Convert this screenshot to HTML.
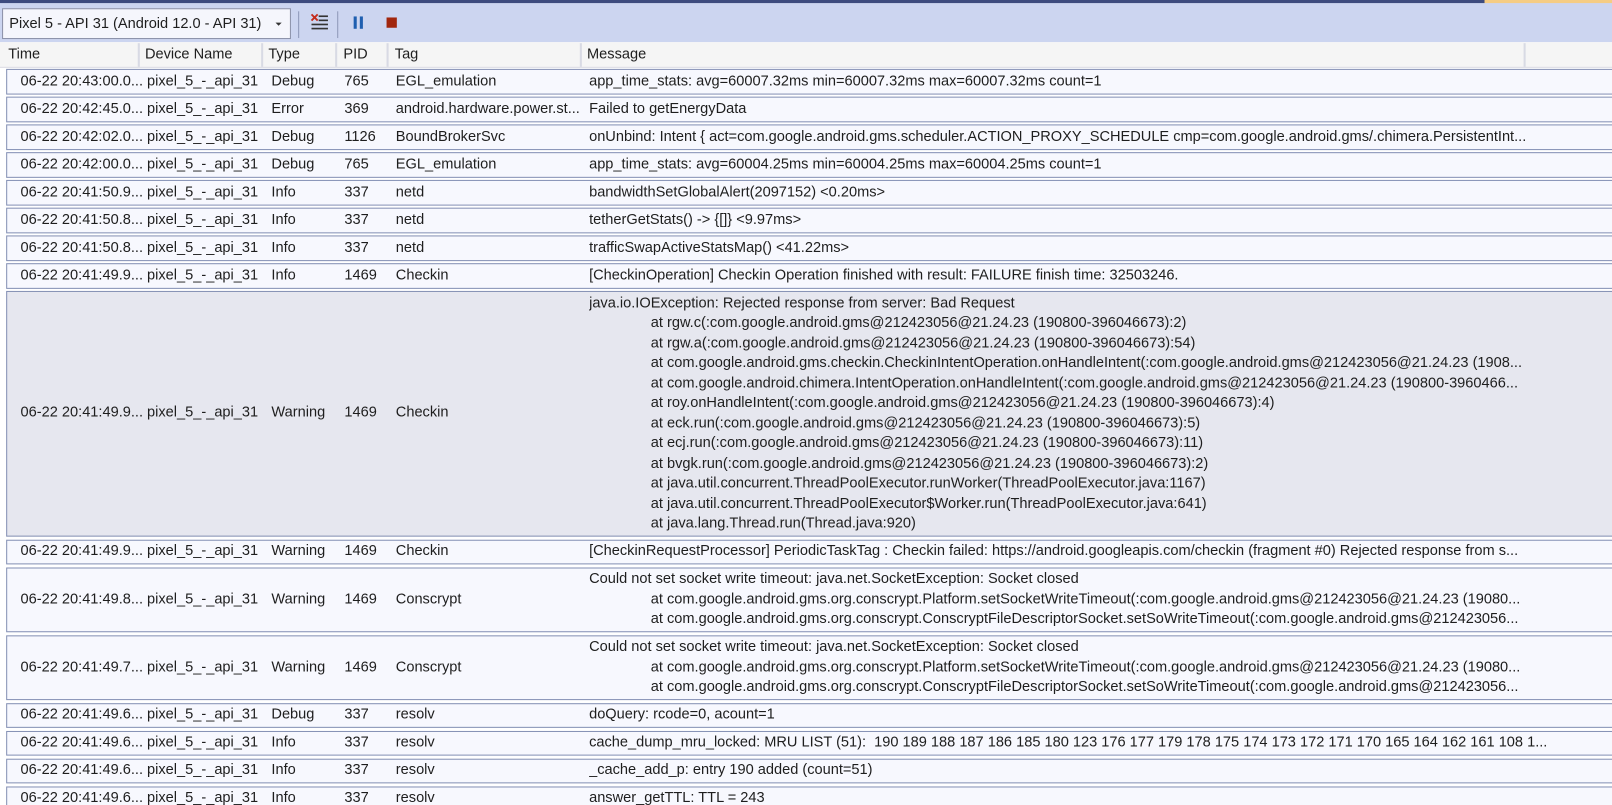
<!DOCTYPE html>
<html><head><meta charset="utf-8"><style>
*{margin:0;padding:0;box-sizing:border-box}
html,body{width:1612px;height:805px;overflow:hidden;background:#fff}
body{font-family:"Liberation Sans",sans-serif;font-size:14.2px;color:#1e1e1e}
#w{position:relative;width:1568px;height:783px;transform:scale(1.02806);transform-origin:0 0}
.top{position:absolute;left:0;top:0;width:1568px;height:4px;background:#3d4b7e}
.top .g{position:absolute;left:1444px;top:0;width:124px;height:4px;background:#f5cc84}
.tb{position:absolute;left:0;top:3px;width:1568px;height:38px;background:#ccd5f0}
.combo{position:absolute;left:2px;top:5px;width:281px;height:30px;background:#f5f6fc;border:1px solid #8a90a8;line-height:28px;padding-left:6px}
.combo .ar{position:absolute;right:8px;top:13px;width:0;height:0;border-left:3px solid transparent;border-right:3px solid transparent;border-top:3px solid #333}
.sep{position:absolute;top:8px;width:1px;height:26px;background:#8e98b8}
.hdr{position:absolute;left:0;top:41px;width:1568px;height:25px;background:#f5f5f5;border-bottom:1px solid #dcdce4}
.hdr span{position:absolute;top:4px}
.hs{position:absolute;top:1px;width:2px;height:23px;background:#d8dae4}
.rows{position:absolute;left:6px;top:67px;width:1580px}
.r{position:relative;border:1px solid #8591b5;background:#f7f8fe;margin-bottom:2.5px;padding:1.5px 0;line-height:19.5px}
.r.sel{background:#e6e7ef}
.r div{position:absolute;white-space:nowrap}
.r .m{position:relative;left:566px;width:935px;overflow:hidden;white-space:nowrap}
.r .m p{white-space:nowrap}
.r .m p.i{padding-left:60px}
.c1{left:13px}.c2{left:136px}.c3{left:257px}.c4{left:328px}.c5{left:378px}
</style></head><body><div id="w">
<div class="top"><div class="g"></div></div>
<div class="tb">
<div class="combo">Pixel 5 - API 31 (Android 12.0 - API 31)<div class="ar"></div></div>
<div class="sep" style="left:290px"></div>
<svg style="position:absolute;left:302px;top:10px" width="18" height="18" viewBox="0 0 18 18">
<path d="M1 1 L7 7 M7 1 L1 7" stroke="#c42b1c" stroke-width="1.8"/>
<rect x="8" y="2" width="9" height="1.6" fill="#333"/>
<rect x="8" y="6" width="9" height="1.6" fill="#333"/>
<rect x="1" y="10" width="16" height="1.6" fill="#333"/>
<rect x="1" y="14" width="16" height="1.6" fill="#333"/>
</svg>
<div class="sep" style="left:328px"></div>
<div style="position:absolute;left:344px;top:13px;width:3px;height:12px;background:#1f5fb0"></div>
<div style="position:absolute;left:350px;top:13px;width:3px;height:12px;background:#1f5fb0"></div>
<div style="position:absolute;left:376px;top:14px;width:10px;height:10px;background:#a1260d"></div>
</div>
<div class="hdr">
<span style="left:8px">Time</span><span style="left:141px">Device Name</span><span style="left:261px">Type</span><span style="left:334px">PID</span><span style="left:384px">Tag</span><span style="left:571px">Message</span>
<div class="hs" style="left:134px"></div><div class="hs" style="left:254px"></div><div class="hs" style="left:326px"></div><div class="hs" style="left:376px"></div><div class="hs" style="left:564px"></div><div class="hs" style="left:1482px"></div>
</div>
<div class="rows">
<div class="r"><div class="c1">06-22 20:43:00.0...</div><div class="c2">pixel_5_-_api_31</div><div class="c3">Debug</div><div class="c4">765</div><div class="c5">EGL_emulation</div><div class="m"><p>app_time_stats: avg=60007.32ms min=60007.32ms max=60007.32ms count=1</p></div></div>
<div class="r"><div class="c1">06-22 20:42:45.0...</div><div class="c2">pixel_5_-_api_31</div><div class="c3">Error</div><div class="c4">369</div><div class="c5">android.hardware.power.st...</div><div class="m"><p>Failed to getEnergyData</p></div></div>
<div class="r"><div class="c1">06-22 20:42:02.0...</div><div class="c2">pixel_5_-_api_31</div><div class="c3">Debug</div><div class="c4">1126</div><div class="c5">BoundBrokerSvc</div><div class="m"><p>onUnbind: Intent { act=com.google.android.gms.scheduler.ACTION_PROXY_SCHEDULE cmp=com.google.android.gms/.chimera.PersistentInt...</p></div></div>
<div class="r"><div class="c1">06-22 20:42:00.0...</div><div class="c2">pixel_5_-_api_31</div><div class="c3">Debug</div><div class="c4">765</div><div class="c5">EGL_emulation</div><div class="m"><p>app_time_stats: avg=60004.25ms min=60004.25ms max=60004.25ms count=1</p></div></div>
<div class="r"><div class="c1">06-22 20:41:50.9...</div><div class="c2">pixel_5_-_api_31</div><div class="c3">Info</div><div class="c4">337</div><div class="c5">netd</div><div class="m"><p>bandwidthSetGlobalAlert(2097152) &lt;0.20ms&gt;</p></div></div>
<div class="r"><div class="c1">06-22 20:41:50.8...</div><div class="c2">pixel_5_-_api_31</div><div class="c3">Info</div><div class="c4">337</div><div class="c5">netd</div><div class="m"><p>tetherGetStats() -&gt; {[]} &lt;9.97ms&gt;</p></div></div>
<div class="r"><div class="c1">06-22 20:41:50.8...</div><div class="c2">pixel_5_-_api_31</div><div class="c3">Info</div><div class="c4">337</div><div class="c5">netd</div><div class="m"><p>trafficSwapActiveStatsMap() &lt;41.22ms&gt;</p></div></div>
<div class="r"><div class="c1">06-22 20:41:49.9...</div><div class="c2">pixel_5_-_api_31</div><div class="c3">Info</div><div class="c4">1469</div><div class="c5">Checkin</div><div class="m"><p>[CheckinOperation] Checkin Operation finished with result: FAILURE finish time: 32503246.</p></div></div>
<div class="r sel"><div class="c1" style="top:108px">06-22 20:41:49.9...</div><div class="c2" style="top:108px">pixel_5_-_api_31</div><div class="c3" style="top:108px">Warning</div><div class="c4" style="top:108px">1469</div><div class="c5" style="top:108px">Checkin</div><div class="m">
<p>java.io.IOException: Rejected response from server: Bad Request</p>
<p class="i">at rgw.c(:com.google.android.gms@212423056@21.24.23 (190800-396046673):2)</p>
<p class="i">at rgw.a(:com.google.android.gms@212423056@21.24.23 (190800-396046673):54)</p>
<p class="i">at com.google.android.gms.checkin.CheckinIntentOperation.onHandleIntent(:com.google.android.gms@212423056@21.24.23 (1908...</p>
<p class="i">at com.google.android.chimera.IntentOperation.onHandleIntent(:com.google.android.gms@212423056@21.24.23 (190800-3960466...</p>
<p class="i">at roy.onHandleIntent(:com.google.android.gms@212423056@21.24.23 (190800-396046673):4)</p>
<p class="i">at eck.run(:com.google.android.gms@212423056@21.24.23 (190800-396046673):5)</p>
<p class="i">at ecj.run(:com.google.android.gms@212423056@21.24.23 (190800-396046673):11)</p>
<p class="i">at bvgk.run(:com.google.android.gms@212423056@21.24.23 (190800-396046673):2)</p>
<p class="i">at java.util.concurrent.ThreadPoolExecutor.runWorker(ThreadPoolExecutor.java:1167)</p>
<p class="i">at java.util.concurrent.ThreadPoolExecutor$Worker.run(ThreadPoolExecutor.java:641)</p>
<p class="i">at java.lang.Thread.run(Thread.java:920)</p></div></div>
<div class="r"><div class="c1">06-22 20:41:49.9...</div><div class="c2">pixel_5_-_api_31</div><div class="c3">Warning</div><div class="c4">1469</div><div class="c5">Checkin</div><div class="m"><p>[CheckinRequestProcessor] PeriodicTaskTag : Checkin failed: https://android.googleapis.com/checkin (fragment #0) Rejected response from s...</p></div></div>
<div class="r"><div class="c1" style="top:21px">06-22 20:41:49.8...</div><div class="c2" style="top:21px">pixel_5_-_api_31</div><div class="c3" style="top:21px">Warning</div><div class="c4" style="top:21px">1469</div><div class="c5" style="top:21px">Conscrypt</div><div class="m">
<p>Could not set socket write timeout: java.net.SocketException: Socket closed</p>
<p class="i">at com.google.android.gms.org.conscrypt.Platform.setSocketWriteTimeout(:com.google.android.gms@212423056@21.24.23 (19080...</p>
<p class="i">at com.google.android.gms.org.conscrypt.ConscryptFileDescriptorSocket.setSoWriteTimeout(:com.google.android.gms@212423056...</p></div></div>
<div class="r"><div class="c1" style="top:21px">06-22 20:41:49.7...</div><div class="c2" style="top:21px">pixel_5_-_api_31</div><div class="c3" style="top:21px">Warning</div><div class="c4" style="top:21px">1469</div><div class="c5" style="top:21px">Conscrypt</div><div class="m">
<p>Could not set socket write timeout: java.net.SocketException: Socket closed</p>
<p class="i">at com.google.android.gms.org.conscrypt.Platform.setSocketWriteTimeout(:com.google.android.gms@212423056@21.24.23 (19080...</p>
<p class="i">at com.google.android.gms.org.conscrypt.ConscryptFileDescriptorSocket.setSoWriteTimeout(:com.google.android.gms@212423056...</p></div></div>
<div class="r"><div class="c1">06-22 20:41:49.6...</div><div class="c2">pixel_5_-_api_31</div><div class="c3">Debug</div><div class="c4">337</div><div class="c5">resolv</div><div class="m"><p>doQuery: rcode=0, acount=1</p></div></div>
<div class="r"><div class="c1">06-22 20:41:49.6...</div><div class="c2">pixel_5_-_api_31</div><div class="c3">Info</div><div class="c4">337</div><div class="c5">resolv</div><div class="m"><p>cache_dump_mru_locked: MRU LIST (51):&nbsp; 190 189 188 187 186 185 180 123 176 177 179 178 175 174 173 172 171 170 165 164 162 161 108 1...</p></div></div>
<div class="r"><div class="c1">06-22 20:41:49.6...</div><div class="c2">pixel_5_-_api_31</div><div class="c3">Info</div><div class="c4">337</div><div class="c5">resolv</div><div class="m"><p>_cache_add_p: entry 190 added (count=51)</p></div></div>
<div class="r"><div class="c1">06-22 20:41:49.6...</div><div class="c2">pixel_5_-_api_31</div><div class="c3">Info</div><div class="c4">337</div><div class="c5">resolv</div><div class="m"><p>answer_getTTL: TTL = 243</p></div></div>
</div>
</div></body></html>
